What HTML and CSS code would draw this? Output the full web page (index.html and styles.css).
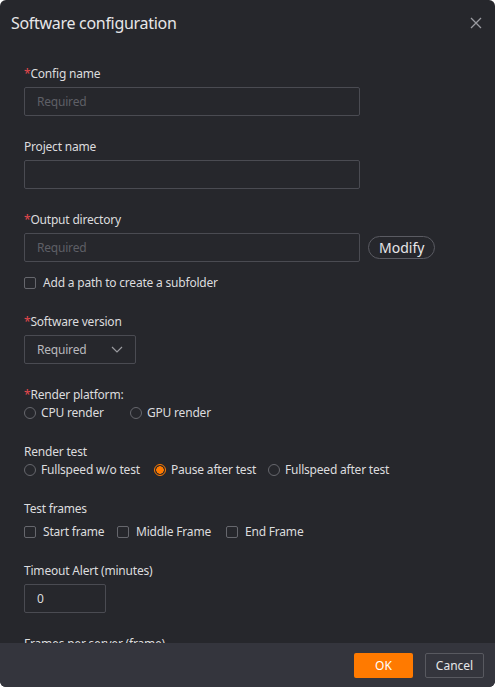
FILE: index.html
```html
<!DOCTYPE html>
<html>
<head>
<meta charset="utf-8">
<link rel="stylesheet" href="styles.css">
</head>
<body>
<div class="dialog">
  <div class="header">
    <div class="title">Software configuration</div>
    <svg class="close" width="12" height="12" viewBox="0 0 12 12"><path d="M1 1L11 11M11 1L1 11" stroke="#9a9ba0" stroke-width="1.3"/></svg>
  </div>
  <div class="body">
    <div class="field">
      <div class="label"><span class="req">*</span>Config name</div>
      <div class="input wide"><span class="ph">Required</span></div>
    </div>
    <div class="field">
      <div class="label">Project name</div>
      <div class="input wide"></div>
    </div>
    <div class="field">
      <div class="label"><span class="req">*</span>Output directory</div>
      <div class="row-input">
        <div class="input wide"><span class="ph">Required</span></div>
        <div class="modify">Modify</div>
      </div>
      <div class="check-row sub"><span class="box"></span><span>Add a path to create a subfolder</span></div>
    </div>
    <div class="field">
      <div class="label"><span class="req">*</span>Software version</div>
      <div class="input select"><span class="sel-text">Required</span>
        <svg width="12" height="7" viewBox="0 0 12 7"><path d="M1 1L6 6L11 1" fill="none" stroke="#9a9ba0" stroke-width="1.2"/></svg>
      </div>
    </div>
    <div class="field">
      <div class="label"><span class="req">*</span>Render platform:</div>
      <div class="opts">
        <span class="opt w-cpu"><span class="radio"></span>CPU render</span>
        <span class="opt"><span class="radio"></span>GPU render</span>
      </div>
    </div>
    <div class="field">
      <div class="label">Render test</div>
      <div class="opts">
        <span class="opt w-full"><span class="radio"></span>Fullspeed w/o test</span>
        <span class="opt w-pause"><span class="radio on"></span>Pause after test</span>
        <span class="opt"><span class="radio"></span>Fullspeed after test</span>
      </div>
    </div>
    <div class="field">
      <div class="label">Test frames</div>
      <div class="opts frames">
        <span class="opt w-start"><span class="box"></span>Start frame</span>
        <span class="opt w-mid"><span class="box"></span>Middle Frame</span>
        <span class="opt"><span class="box"></span>End Frame</span>
      </div>
    </div>
    <div class="field">
      <div class="label">Timeout Alert (minutes)</div>
      <div class="input small"><span class="val">0</span></div>
    </div>
    <div class="field">
      <div class="label">Frames per server (frame)</div>
    </div>
  </div>
  <div class="footer">
    <div class="btn ok">OK</div>
    <div class="btn cancel">Cancel</div>
  </div>
</div>
</body>
</html>
```
FILE: styles.css
```css
html, body {
  margin: 0;
  padding: 0;
  background: #ffffff;
}
body {
  font-family: "Noto Sans", "Open Sans", sans-serif;
  color: #dcdcde;
}
.dialog {
  width: 495px;
  height: 687px;
  background: #26272c;
  border-radius: 6px;
  display: flex;
  flex-direction: column;
  overflow: hidden;
}
.header {
  height: 46px;
  flex: none;
  display: flex;
  align-items: center;
  justify-content: space-between;
  padding: 0 13px 0 11px;
  box-sizing: border-box;
}
.title {
  font-size: 16px;
  color: #e6e6e8;
  letter-spacing: -0.3px;
}
.body {
  flex: 1;
  overflow: hidden;
  padding: 20px 0 0 24px;
  display: flex;
  flex-direction: column;
  gap: 23px;
  letter-spacing: -0.2px;
}
.field {
  display: flex;
  flex-direction: column;
}
.label {
  font-size: 12px;
  line-height: 16px;
  margin-bottom: 5px;
  color: #dcdcde;
}
.req {
  color: #e5484d;
}
.input {
  height: 29px;
  box-sizing: border-box;
  border: 1px solid #4a4b52;
  border-radius: 2px;
  display: flex;
  align-items: center;
  padding-left: 12px;
  font-size: 12px;
}
.wide {
  width: 336px;
}
.ph {
  color: #5e5f66;
}
.row-input {
  display: flex;
  align-items: center;
  gap: 8px;
}
.modify {
  height: 23px;
  box-sizing: border-box;
  border: 1px solid #5a5b62;
  border-radius: 12px;
  padding: 0 10px;
  font-size: 14px;
  line-height: 21px;
  color: #e6e6e8;
  letter-spacing: 0;
}
.check-row {
  display: flex;
  align-items: center;
  font-size: 12px;
}
.sub {
  margin-top: 12px;
  gap: 7px;
}
.box {
  width: 12px;
  height: 12px;
  box-sizing: border-box;
  border: 1px solid #66676d;
  border-radius: 2px;
  flex: none;
}
.select {
  width: 112px;
  justify-content: space-between;
  padding-right: 12px;
}
.sel-text {
  color: #b8b8bc;
}
.opts {
  display: flex;
  align-items: center;
  font-size: 12px;
  margin-top: -4px;
}
.frames {
  margin-top: 1px;
}
.opt {
  display: flex;
  align-items: center;
  gap: 5px;
}
.frames .opt {
  gap: 7px;
}
.w-cpu { width: 106px; }
.w-full { width: 130px; }
.w-pause { width: 114px; }
.w-start { width: 93px; }
.w-mid { width: 109px; }
.radio {
  width: 12px;
  height: 12px;
  box-sizing: border-box;
  border: 1px solid #66676d;
  border-radius: 50%;
  flex: none;
}
.radio.on {
  border-color: #ff7a00;
  background: radial-gradient(circle, #ff7a00 0 3.5px, transparent 4px);
}
.small {
  width: 82px;
}
.val {
  color: #dcdcde;
}
.footer {
  height: 44px;
  flex: none;
  background: #34353d;
  display: flex;
  align-items: center;
  justify-content: flex-end;
  gap: 12px;
  padding-right: 11px;
}
.btn {
  width: 59px;
  height: 25px;
  box-sizing: border-box;
  border-radius: 2px;
  display: flex;
  align-items: center;
  justify-content: center;
  font-size: 12px;
}
.ok {
  background: #ff7a00;
  color: #ffffff;
}
.cancel {
  border: 1px solid #585960;
  color: #e6e6e8;
}
```
